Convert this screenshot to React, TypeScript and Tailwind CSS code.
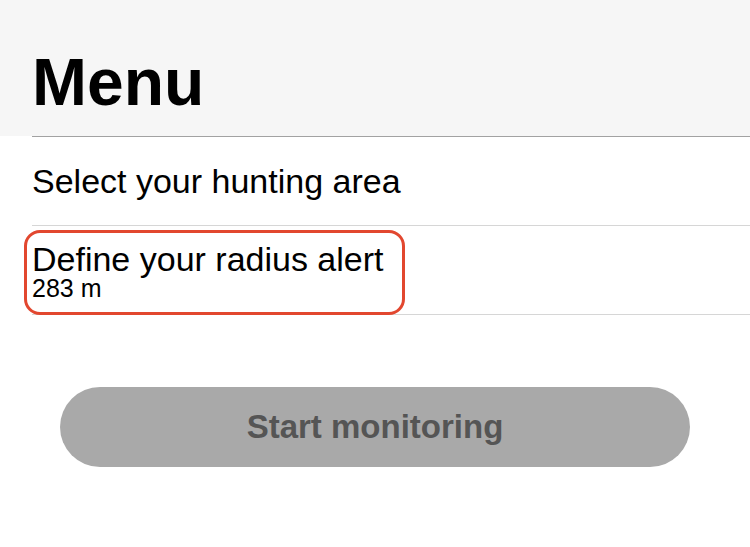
import React from "react";

type Row = {
  title: string;
  detail?: string;
  highlighted?: boolean;
};

const rows: Row[] = [
  { title: "Select your hunting area" },
  { title: "Define your radius alert", detail: "283 m", highlighted: true },
];

function MenuRow({ row }: { row: Row }) {
  if (!row.detail) {
    return (
      <div className="flex h-[88px] items-center pl-8">
        <span className="text-[34px] leading-none text-black">{row.title}</span>
      </div>
    );
  }

  return (
    <div className="relative flex h-[88px] flex-col pl-8 pt-[16px]">
      <span className="text-[34px] leading-none text-black">{row.title}</span>
      <span className="text-[25px] leading-none text-black">{row.detail}</span>
      {/* highlight annotation */}
      {row.highlighted ? (
        <div className="pointer-events-none absolute left-[24px] top-[4px] h-[85px] w-[381px] rounded-[16px] border-[3px] border-[#e2472f]" />
      ) : null}
    </div>
  );
}

export default function App() {
  return (
    <div
      className="h-[547px] w-[750px] overflow-hidden bg-white"
      style={{ fontFamily: '"Liberation Sans", Arial, sans-serif' }}
    >
      {/* Large title header */}
      <div className="flex h-[136px] items-end bg-[#f6f6f6] pb-[21px] pl-8">
        <h1 className="text-[66px] font-bold leading-none text-black">Menu</h1>
      </div>
      <div className="ml-8 h-px bg-[#a2a2a2]" />

      {/* List */}
      <div>
        {rows.map((row) => (
          <div key={row.title}>
            <MenuRow row={row} />
            <div className="ml-8 h-px bg-[#d6d6d6]" />
          </div>
        ))}
      </div>

      {/* Action */}
      <div className="px-[60px] pt-[72px]">
        <button
          disabled
          className="flex h-[80px] w-full items-center justify-center rounded-full bg-[#a9a9a9] text-[33px] font-bold text-[#555555]"
        >
          Start monitoring
        </button>
      </div>
    </div>
  );
}
